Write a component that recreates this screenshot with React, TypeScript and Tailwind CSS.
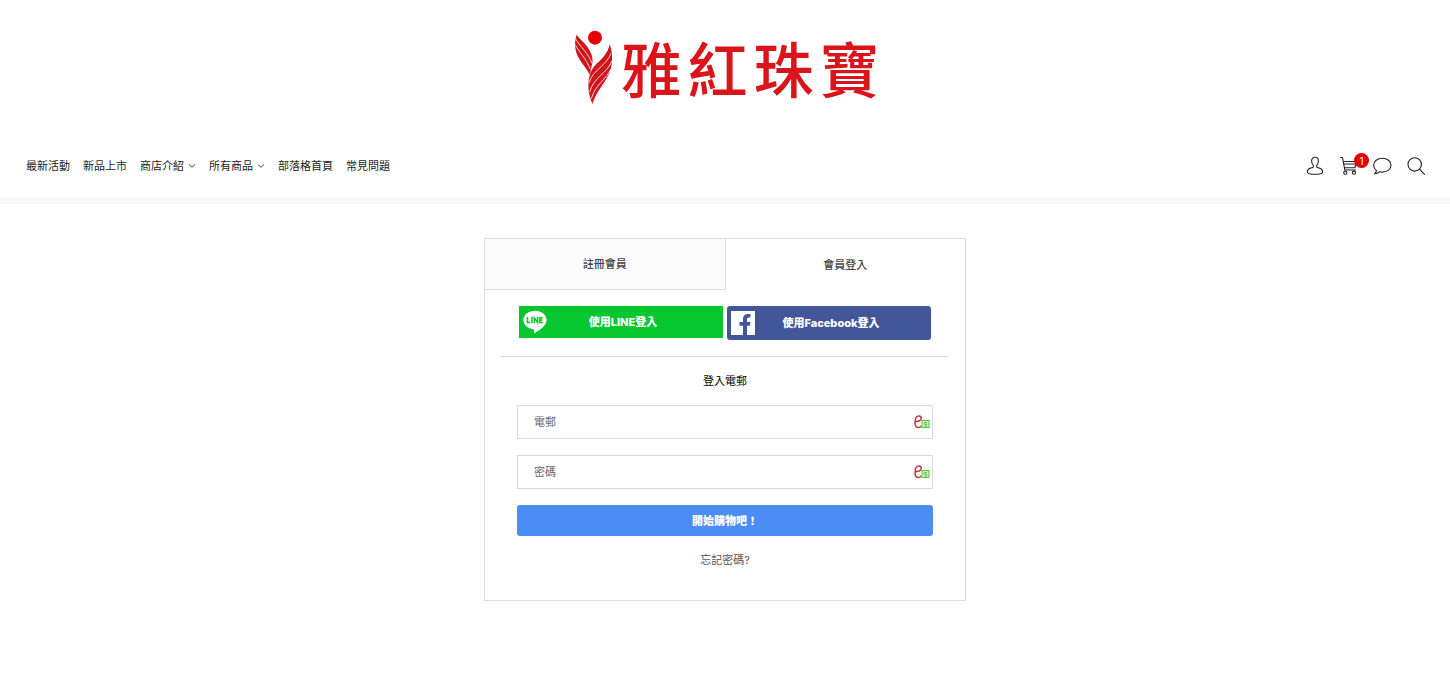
import { useState } from 'react';
import type { ReactNode } from 'react';

const navItems = [
  { label: '最新活動' },
  { label: '新品上市' },
  { label: '商店介紹', menu: true },
  { label: '所有商品', menu: true },
  { label: '部落格首頁' },
  { label: '常見問題' },
];

function LogoMark() {
  return (
    <svg viewBox="30 18 111 222" className="h-[74px] w-[37px]" aria-hidden="true">
      <circle cx="90" cy="41" r="21" fill="#e60000" />
      <path
        d="M35 32C46 48 68 62 78 88C83 101 84 112 81 122C78 132 77 142 75 153C66 134 48 116 39 98C28 76 28 54 35 32Z"
        fill="#cf161c"
      />
      <path
        d="M134 60C145 90 143 124 132 150C118 180 96 200 82 240C75 222 70 205 70 186C70 158 78 136 94 120C114 102 130 84 134 60Z"
        fill="#cf161c"
      />
      <g fill="none" stroke="#ffffff" strokeWidth="2.4">
        <path d="M31 62C40 84 64 102 76 136" />
        <path d="M33 46C46 70 70 86 81 118" />
        <path d="M138 88C124 126 84 136 71 178" />
        <path d="M141 110C128 148 86 158 74 204" />
        <path d="M137 136C124 166 92 180 79 224" />
      </g>
    </svg>
  );
}

function ChevronIcon() {
  return (
    <svg viewBox="0 0 8 6" className="h-[6px] w-[8px]" fill="none" stroke="#444444" aria-hidden="true">
      <path d="M1 1.5 4 4.3 7 1.5" />
    </svg>
  );
}

function LineIcon({ children }: { children: ReactNode }) {
  return (
    <svg
      viewBox="0 0 20 20"
      className="h-5 w-5"
      fill="none"
      stroke="#222222"
      strokeWidth="1.1"
      strokeLinecap="round"
      strokeLinejoin="round"
      aria-hidden="true"
    >
      {children}
    </svg>
  );
}

function LineLogo() {
  return (
    <svg viewBox="0 0 24 24" className="h-6 w-6" aria-hidden="true">
      <path
        d="M12 .8C5.600.8.4 5 .4 10.100c0 4.600 4.100 8.400 9.600 9.200 1.400.3 1.300.8 1 2.800-.1.900.3 1.200 1.200.7C14.500 21.500 23.600 16.600 23.600 10.100 23.600 5 18.400.8 12 .8Z"
        fill="#ffffff"
      />
      <g fill="none" stroke="#06c72f" strokeWidth="1.500">
        <path d="M4.500 7v5.500h2.800M9 7v6.200M11.300 13.200V7.800l3.300 4.700V7M19.800 7.700h-3v4.800h3M16.800 10.100h2.700" />
      </g>
    </svg>
  );
}

function FacebookLogo() {
  return (
    <svg viewBox="0 0 24 24" className="h-6 w-6" aria-hidden="true">
      <rect width="24" height="24" fill="#ffffff" />
      <path
        d="M12 24v-9.300H8.500v-3.700H12V8.300c0-3.600 2.200-5.300 5.300-5.300h2.200v3.600H18c-1.500 0-2 .7-2 2V11h3.500l-.5 3.700h-3V24Z"
        fill="#43569a"
      />
    </svg>
  );
}

function FillIcon() {
  return (
    <svg viewBox="0 0 16 14" className="h-[14px] w-4 shrink-0" fill="none" aria-hidden="true">
      <path
        d="M1.800 6.300C4.500 6.800 7.300 5.400 7.300 3.200 7.300 1.600 6.200.9 4.800.9 2.500.9 1 3.700 1 7.200c0 3.300 1.200 5.300 3.400 5.300 1.300 0 2.300-.6 2.900-1.600"
        stroke="#b93a42"
        strokeWidth="1.500"
      />
      <rect x="8" y="5.500" width="7" height="7" fill="#c9f2b8" stroke="#5cc13f" />
      <path d="M12.700 7.500h-2v1.800h1.800v1.800h-2" stroke="#5cc13f" />
    </svg>
  );
}

function Field({ id, type, label }: { id: string; type: string; label: string }) {
  return (
    <div className="flex h-[34px] items-center border border-[#dcdcdc] pr-0.5 focus-within:border-[#4a8df5]">
      <input
        id={id}
        type={type}
        aria-label={label}
        placeholder={label}
        className="h-full min-w-0 flex-1 bg-transparent px-4 text-[11px] text-[#333333] outline-none placeholder:text-[#666666]"
      />
      <FillIcon />
    </div>
  );
}

export default function App() {
  const [tab, setTab] = useState<'register' | 'login'>('login');
  const tabClass = (active: boolean) =>
    active
      ? 'h-[51px] flex-1 bg-white text-[11px] font-medium text-[#444444]'
      : 'h-[51px] flex-1 border-r border-b border-[#dddddd] bg-[#fbfbfb] text-[11px] font-medium text-[#444444]';

  return (
    <div className="bg-white font-['Inter','Noto_Sans_CJK_TC',sans-serif] text-[11px] leading-4 text-[#222222]">
      <header className="border-b-6 border-[#f9f9f9]">
        <h1 className="pt-[30px]">
          <a href="#" className="flex h-[74px] items-center justify-center gap-2.5 pl-1 text-[#d9141a]">
            <LogoMark />
            <span className="flex gap-1.5 font-['Noto_Sans_CJK_TC',sans-serif] text-[60px] leading-[70px] font-medium">
              <span>雅</span>
              <span>紅</span>
              <span>珠</span>
              <span>寶</span>
            </span>
          </a>
        </h1>

        <div className="flex items-center justify-between px-6 pt-[52px] pb-[22px]">
          <nav className="flex items-center gap-[13px] pl-0.5">
            {navItems.map((item) => (
              <a key={item.label} href="#" className="flex items-center gap-1 whitespace-nowrap">
                {item.label}
                {item.menu && <ChevronIcon />}
              </a>
            ))}
          </nav>
          <div className="flex items-center gap-3.5">
            <button type="button" aria-label="會員">
              <LineIcon>
                <path d="M11 1.300C8.800 1.300 7.600 2.800 7.600 5c0 1.500.5 3 1.400 4 .6.700.5 2-.4 2.400-1.600.7-5.300 1.200-5.300 4.300 0 1.900 3.400 2.600 7.700 2.600s7.700-.7 7.700-2.600c0-3.100-3.700-3.600-5.300-4.300-.9-.4-1-1.700-.4-2.400.9-1 1.400-2.500 1.400-4C14.400 2.800 13.200 1.300 11 1.300Z" />
              </LineIcon>
            </button>
            <button type="button" aria-label="購物車" className="relative">
              <LineIcon>
                <path d="M2.500 1.500h2l2.300 12.500h10.700M5.200 5.500h13l-1.300 6.300H6.400M5.600 8h12" />
                <circle cx="7.300" cy="16.700" r="1.600" />
                <circle cx="15.900" cy="16.700" r="1.600" />
              </LineIcon>
              <span className="absolute -top-[3px] left-4 flex h-[15px] w-[15px] items-center justify-center rounded-full bg-[#e60000] text-[10px] leading-none text-white">
                1
              </span>
            </button>
            <button type="button" aria-label="訊息">
              <LineIcon>
                <path d="M10.300 2.300c-4.900 0-8.700 3-8.700 6.900 0 2.400 1.200 4.100 2.900 5.400-.1 1.200-.9 2.300-1.900 3.100 1.800.1 3.500-.6 4.700-1.900 1 .2 2 .3 3 .3 4.900 0 8.700-3 8.700-6.900s-3.800-6.900-8.700-6.900Z" />
              </LineIcon>
            </button>
            <button type="button" aria-label="搜尋">
              <LineIcon>
                <circle cx="8.700" cy="8.400" r="6.700" />
                <path d="m13.500 13.200 5 5.200" />
              </LineIcon>
            </button>
          </div>
        </div>
      </header>

      <main className="px-4 pt-[34px] pb-20">
        <section className="mx-auto max-w-[482px] border border-[#dddddd]">
          <div role="tablist" className="flex">
            <button
              type="button"
              role="tab"
              aria-selected={tab === 'register'}
              onClick={() => setTab('register')}
              className={tabClass(tab === 'register')}
            >
              註冊會員
            </button>
            <button
              type="button"
              role="tab"
              aria-selected={tab === 'login'}
              onClick={() => setTab('login')}
              className={tabClass(tab === 'login')}
            >
              會員登入
            </button>
          </div>

          <div className="px-4 pt-4 pb-8">
            <div className="flex items-start gap-1 border-b border-[#dddddd] px-[18px] pb-4">
              <button
                type="button"
                className="flex h-8 flex-1 items-center bg-[#06c72f] pr-8 pl-1 font-extrabold text-white"
              >
                <LineLogo />
                <span className="flex-1 pl-2">使用LINE登入</span>
              </button>
              <button
                type="button"
                className="flex h-[34px] flex-1 items-center rounded-[3px] bg-[#43569a] pr-8 pl-1 font-extrabold text-white"
              >
                <FacebookLogo />
                <span className="flex-1 pl-2">使用Facebook登入</span>
              </button>
            </div>

            <form className="flex flex-col gap-4 px-4 pt-4" onSubmit={(e) => e.preventDefault()}>
              <h2 className="text-center text-black">登入電郵</h2>
              <Field id="email" type="email" label="電郵" />
              <Field id="password" type="password" label="密碼" />
              <button
                type="submit"
                className="h-[31px] rounded-[3px] bg-[#4a8df5] font-black text-white"
              >
                開始購物吧！
              </button>
              <a href="#" className="self-center text-[#555555]">
                忘記密碼?
              </a>
            </form>
          </div>
        </section>
      </main>
    </div>
  );
}
